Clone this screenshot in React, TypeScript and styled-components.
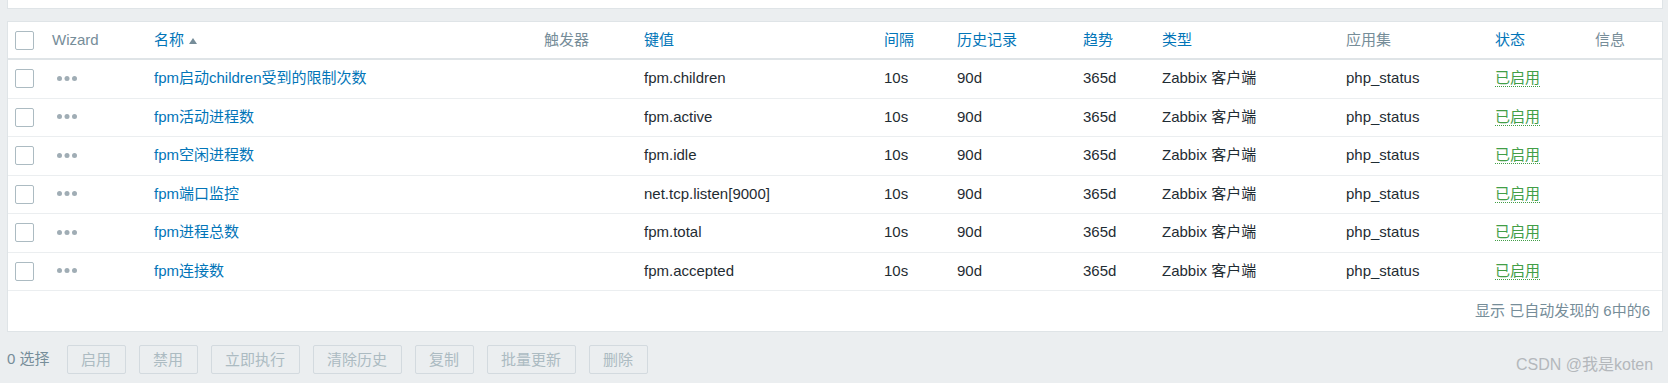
import React from 'react';
import styled, { createGlobalStyle } from 'styled-components';

const GlobalStyle = createGlobalStyle`
  html, body {
    margin: 0;
    padding: 0;
    background: #ebeef0;
  }
  body {
    font-family: Arial, "Liberation Sans", "Noto Sans CJK SC", sans-serif;
    font-size: 15px;
    line-height: 16px;
    color: #1f2c33;
  }
`;

const COLS = '39px 102px 390px 100px 240px 73px 126px 79px 184px 149px 100px 72px';

const Page = styled.div`
  position: relative;
  width: 1668px;
  height: 383px;
  overflow: hidden;
  padding-left: 7px;
  box-sizing: border-box;
`;

const TopPanel = styled.div`
  width: 1654px;
  height: 8px;
  background: #ffffff;
  border: 1px solid #dfe4e7;
  border-top: none;
`;

const ListPanel = styled.div`
  width: 1654px;
  margin-top: 12px;
  background: #ffffff;
  border: 1px solid #dfe4e7;
`;

const HeadRow = styled.div`
  display: grid;
  grid-template-columns: ${COLS};
  align-items: center;
  height: 36px;
  border-bottom: 2px solid #dfe4e7;
`;

const Row = styled.div`
  display: grid;
  grid-template-columns: ${COLS};
  align-items: center;
  height: 37.5px;
  border-bottom: 1px solid #ebeef0;
`;

const HeadCell = styled.div<{ $sortable?: boolean }>`
  padding: 0 5px 1px;
  white-space: nowrap;
  color: ${p => (p.$sortable ? '#0275b8' : '#768d99')};
  display: flex;
  align-items: center;
`;

const Cell = styled.div`
  padding: 0 5px 1px;
  white-space: nowrap;
  display: flex;
  align-items: center;
`;

const CheckCell = styled.div`
  padding-left: 7px;
  display: flex;
  align-items: center;
`;

const Checkbox = styled.span`
  display: block;
  width: 19px;
  height: 19px;
  box-sizing: border-box;
  background: #ffffff;
  border: 1px solid #acbbc2;
  border-radius: 2px;
`;

const SortArrow = styled.span`
  display: inline-block;
  margin-left: 5px;
  margin-top: 2px;
  width: 0;
  height: 0;
  border-left: 4.5px solid transparent;
  border-right: 4.5px solid transparent;
  border-bottom: 6px solid #768d99;
`;

const NameLink = styled.span`
  color: #0275b8;
`;

const Status = styled.span`
  color: #429e47;
  border-bottom: 1px dotted #429e47;
  line-height: 17px;
`;

const WizardIcon = styled.svg`
  margin-left: 5px;
  display: block;
`;

const Paging = styled.div`
  height: 40px;
  padding-right: 12px;
  display: flex;
  align-items: center;
  justify-content: flex-end;
  color: #768d99;
`;

const Toolbar = styled.div`
  display: flex;
  align-items: center;
  gap: 13px;
  margin-top: 13px;
`;

const Selected = styled.span`
  color: #768d99;
  margin-right: 4px;
  padding-bottom: 1px;
`;

const Button = styled.button`
  height: 29px;
  padding: 0 13.5px;
  box-sizing: border-box;
  font-family: inherit;
  font-size: 15px;
  line-height: 16px;
  color: #acbbc2;
  background: #ebeef0;
  border: 1px solid #d3dadf;
  border-radius: 2px;
`;

const Watermark = styled.div`
  position: absolute;
  left: 1516px;
  top: 355px;
  font-size: 16px;
  line-height: 20px;
  color: #b4b8bc;
  white-space: nowrap;
`;

interface Item {
  name: string;
  key: string;
}

const items: Item[] = [
  { name: 'fpm启动children受到的限制次数', key: 'fpm.children' },
  { name: 'fpm活动进程数', key: 'fpm.active' },
  { name: 'fpm空闲进程数', key: 'fpm.idle' },
  { name: 'fpm端口监控', key: 'net.tcp.listen[9000]' },
  { name: 'fpm进程总数', key: 'fpm.total' },
  { name: 'fpm连接数', key: 'fpm.accepted' },
];

const headers: { label: string; sortable?: boolean; arrow?: boolean }[] = [
  { label: 'Wizard' },
  { label: '名称', sortable: true, arrow: true },
  { label: '触发器' },
  { label: '键值', sortable: true },
  { label: '间隔', sortable: true },
  { label: '历史记录', sortable: true },
  { label: '趋势', sortable: true },
  { label: '类型', sortable: true },
  { label: '应用集' },
  { label: '状态', sortable: true },
  { label: '信息' },
];

const Dots = () => (
  <WizardIcon width="21" height="5" viewBox="0 0 21 5">
    <circle cx="2.5" cy="2.5" r="2.5" fill="#a0adb5" />
    <circle cx="10" cy="2.5" r="2.5" fill="#a0adb5" />
    <circle cx="17.5" cy="2.5" r="2.5" fill="#a0adb5" />
  </WizardIcon>
);

const actions = ['启用', '禁用', '立即执行', '清除历史', '复制', '批量更新', '删除'];

export default function App() {
  return (
    <Page>
      <GlobalStyle />
      <TopPanel />
      <ListPanel>
        <HeadRow>
          <CheckCell><Checkbox /></CheckCell>
          {headers.map(h => (
            <HeadCell key={h.label} $sortable={h.sortable}>
              {h.label}
              {h.arrow ? <SortArrow /> : null}
            </HeadCell>
          ))}
        </HeadRow>
        {items.map(item => (
          <Row key={item.key}>
            <CheckCell><Checkbox /></CheckCell>
            <Cell><Dots /></Cell>
            <Cell><NameLink>{item.name}</NameLink></Cell>
            <Cell />
            <Cell>{item.key}</Cell>
            <Cell>10s</Cell>
            <Cell>90d</Cell>
            <Cell>365d</Cell>
            <Cell>Zabbix 客户端</Cell>
            <Cell>php_status</Cell>
            <Cell><Status>已启用</Status></Cell>
            <Cell />
          </Row>
        ))}
        <Paging>显示 已自动发现的 6中的6</Paging>
      </ListPanel>
      <Toolbar>
        <Selected>0 选择</Selected>
        {actions.map(a => (
          <Button key={a} disabled>{a}</Button>
        ))}
      </Toolbar>
      <Watermark>CSDN @我是koten</Watermark>
    </Page>
  );
}
